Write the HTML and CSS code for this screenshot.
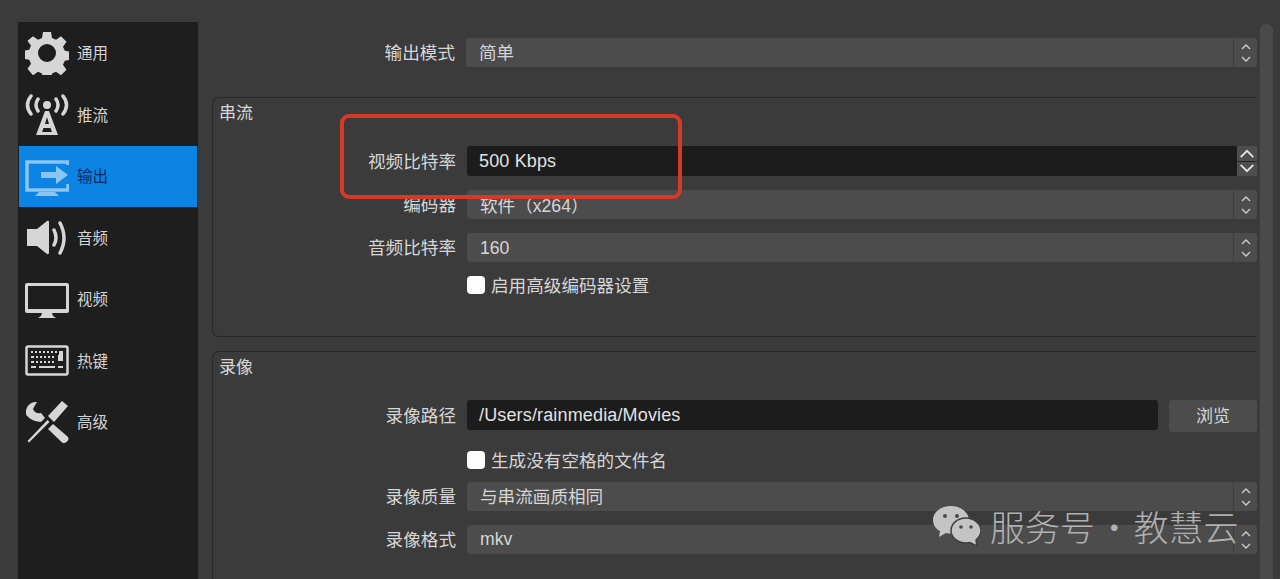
FILE: index.html
```html
<!DOCTYPE html>
<html lang="zh">
<head>
<meta charset="utf-8">
<title>设置</title>
<link rel="stylesheet" href="styles.css">
</head>
<body>
<nav class="sidebar">
  <div class="nav-item">
    <svg class="nav-icon" viewBox="0 0 44 44"><path class="fill" fill-rule="evenodd" d="M18 1h8l1 6 4 1.800 5-3.500 5.500 5.500-3.500 5 1.800 4 6 1v8l-6 1-1.800 4 3.500 5-5.500 5.500-5-3.500-4 1.800-1 6h-8l-1-6-4-1.800-5 3.500L2.500 37.800l3.500-5-1.800-4-6-1v-8l6-1 1.800-4-3.500-5L8 5.300l5 3.500 4-1.800zM22 13a9 9 0 1 0 0 18 9 9 0 0 0 0-18z"/></svg>
    <span>通用</span>
  </div>
  <div class="nav-item">
    <svg class="nav-icon" viewBox="0 0 44 44"><circle class="fill" cx="22" cy="12" r="4"/><path class="fill" fill-rule="evenodd" d="M20 18h4l9 24H11zM22 24l-2 7h4zM18.500 35l-1.500 4h10l-1.500-4z"/><path class="line" d="M6 3Q-1 12 6 21M13 6Q9 12 13 18M38 3Q45 12 38 21M31 6Q35 12 31 18"/></svg>
    <span>推流</span>
  </div>
  <div class="nav-item active">
    <svg class="nav-icon" viewBox="0 0 44 44"><path class="blue-line" d="M43 11V8H2v28h41v-6"/><path class="blue-fill" d="M14 38h16l4 4H10zM16 18h15v-6l12 9-12 9v-6H16z"/></svg>
    <span>输出</span>
  </div>
  <div class="nav-item">
    <svg class="nav-icon" viewBox="0 0 44 44"><path class="fill" d="M2 13h10L22 5c1-.500 2 0 2 1v31c0 1-1 1.500-2 1l-10-8H2z"/><path class="line" d="M29 14q4 8 0 15M35 7q8 15 0 30"/></svg>
    <span>音频</span>
  </div>
  <div class="nav-item">
    <svg class="nav-icon" viewBox="0 0 44 44"><path class="fill" fill-rule="evenodd" d="M2 6h40a2 2 0 0 1 2 2v26a2 2 0 0 1-2 2H2a2 2 0 0 1-2-2V8a2 2 0 0 1 2-2zM3 9v23h38V9zM17 36h10l1 3 3 2H13l3-2z"/></svg>
    <span>视频</span>
  </div>
  <div class="nav-item">
    <svg class="nav-icon" viewBox="0 0 44 44"><rect class="line-thin" x="1.500" y="7.500" width="41" height="28" rx="1.500"/><path class="keys keys-up" d="M6 14h2v2H6zM10 14h2v2h-2zM14 14h2v2h-2zM18 14h2v2h-2zM22 14h2v2h-2zM26 14h2v2h-2zM30 14h2v2h-2zM34 14h4v10h-5v-6h1zM6 19h3v2H6zM11 19h2v2h-2zM15 19h2v2h-2zM19 19h2v2h-2zM23 19h2v2h-2zM27 19h2v2h-2zM6 24h3v2H6zM11 24h2v2h-2zM15 24h2v2h-2zM19 24h2v2h-2zM23 24h2v2h-2zM27 24h2v2h-2zM6 29h5v2H6zM14 29h16v2H14zM33 29h5v2h-5z"/></svg>
    <span>热键</span>
  </div>
  <div class="nav-item">
    <svg class="nav-icon" viewBox="0 0 44 44"><path class="fill" d="M37 1l6 5-14 16-6-6zM22.500 20l2 2L4 42.500l-1.500-1.500zM28 24l15 13c1 2 .500 3.500-1.500 5s-3.500 1.500-5 0L23 29zM12 2C5 1-1 8 1.500 15.500 6 20 11 22 16 22l4-4-4-5c-4 1-7-1-8-4l1-2z"/></svg>
    <span>高级</span>
  </div>
</nav>

<main class="main">
  <div class="row top-row">
    <label class="label">输出模式</label>
    <div class="select"><span class="raise">简单</span><i class="spin"><svg viewBox="0 0 12 22"><path d="M2 7l4-4 4 4M2 15l4 4 4-4"/></svg></i></div>
  </div>

  <section class="group group-stream">
    <h2 class="group-title">串流</h2>
    <div class="row row-bitrate">
      <label class="label">视频比特率</label>
      <div class="input input-bitrate"><span>500 Kbps</span></div>
      <div class="stepper">
        <div class="step"><svg viewBox="0 0 20 14"><path d="M3 11l7-7 7 7"/></svg></div>
        <div class="step"><svg viewBox="0 0 20 14"><path d="M3 3l7 7 7-7"/></svg></div>
      </div>
    </div>
    <div class="row row-encoder">
      <label class="label">编码器</label>
      <div class="select"><span>软件（x264）</span><i class="spin"><svg viewBox="0 0 12 22"><path d="M2 7l4-4 4 4M2 15l4 4 4-4"/></svg></i></div>
    </div>
    <div class="row row-audio">
      <label class="label">音频比特率</label>
      <div class="select"><span class="lower">160</span><i class="spin"><svg viewBox="0 0 12 22"><path d="M2 7l4-4 4 4M2 15l4 4 4-4"/></svg></i></div>
    </div>
    <div class="row row-check">
      <span class="label"></span>
      <div class="check"><b class="box"></b><span class="raise">启用高级编码器设置</span></div>
    </div>
  </section>

  <section class="group group-record">
    <h2 class="group-title">录像</h2>
    <div class="row row-path">
      <label class="label">录像路径</label>
      <div class="input input-path"><span>/Users/rainmedia/Movies</span></div>
      <div class="button">浏览</div>
    </div>
    <div class="row row-check2">
      <span class="label"></span>
      <div class="check"><b class="box"></b><span class="raise">生成没有空格的文件名</span></div>
    </div>
    <div class="row row-quality">
      <label class="label">录像质量</label>
      <div class="select"><span class="raise">与串流画质相同</span><i class="spin"><svg viewBox="0 0 12 22"><path d="M2 7l4-4 4 4M2 15l4 4 4-4"/></svg></i></div>
    </div>
    <div class="row row-format">
      <label class="label">录像格式</label>
      <div class="select"><span>mkv</span><i class="spin"><svg viewBox="0 0 12 22"><path d="M2 7l4-4 4 4M2 15l4 4 4-4"/></svg></i></div>
    </div>
  </section>
</main>

<div class="scrollbar"></div>

<div class="highlight"></div>

<div class="watermark">
  <svg class="wechat" viewBox="0 0 48 40"><path class="wm-fill" d="M18 0C8 0 0 6 0 14c0 5 3 9 7 11l-1 6 7-4c2 .500 3 .500 5 .500C28 27.500 36 21 36 14S28 0 18 0z"/><circle class="wm-dot" cx="12" cy="10" r="2"/><circle class="wm-dot" cx="24" cy="10" r="2"/><path class="wm-fill wm-edge" d="M33 12c-9 0-15 6-15 12.500S24 37 33 37c1.500 0 3 0 4-.500l7 3.500-1-6c3-2.500 5-6 5-9.500C48 18 41 12 33 12z"/><circle class="wm-dot" cx="28" cy="21" r="1.800"/><circle class="wm-dot" cx="38" cy="21" r="1.800"/></svg>
  <span class="wm-text">服务号 · 教慧云</span>
</div>
</body>
</html>
```

FILE: styles.css
```css
* { box-sizing: border-box; }

html, body { height: 100%; }

body {
  margin: 0;
  height: 579px;
  overflow: hidden;
  display: flex;
  align-items: flex-start;
  background: #3b3b3b;
  color: #d9d9d9;
  font-family: "Liberation Sans", "Noto Sans CJK SC", sans-serif;
  font-size: 17px;
}

.sidebar {
  flex: none;
  width: 180px;
  height: 557px;
  margin: 22px 0 0 18px;
  padding: .5px 1px 0;
  background: #1e1e1e;
}

.nav-item {
  display: flex;
  align-items: center;
  gap: 8px;
  height: 61.5px;
  padding-left: 6px;
  font-size: 15.5px;
  color: #d4d4d4;
}

.nav-item span { padding-bottom: 2px; }

.nav-item.active { background: #0b84e3; color: #05296b; }

.nav-icon { width: 44px; height: 44px; flex: none; }

.fill { fill: #d6d6d6; }
.keys { fill: #d6d6d6; }
.keys-up { transform: translateY(-2px); }
.line { fill: none; stroke: #d6d6d6; stroke-width: 3.500; stroke-linecap: round; }
.line-thin { fill: none; stroke: #d6d6d6; stroke-width: 2.500; }
.blue-line { fill: none; stroke: #8ac5f2; stroke-width: 3.500; }
.blue-fill { fill: #8ac5f2; }

.main {
  flex: none;
  width: 1045px;
  margin-left: 14px;
  padding-top: 38px;
}

.row { display: flex; align-items: center; }

.label {
  flex: none;
  width: 243px;
  padding-bottom: 2px;
  text-align: right;
  white-space: nowrap;
  font-size: 17.6px;
  color: #d6d6d6;
}

.raise { padding-bottom: 2px; }
.lower { padding-top: 2px; }

.select {
  flex: 1;
  display: flex;
  align-items: center;
  justify-content: space-between;
  height: 29px;
  margin-left: 11px;
  padding-left: 13px;
  border-radius: 3px;
  background: #4c4c4c;
  font-size: 17.6px;
  color: #d6d6d6;
}

.spin {
  display: flex;
  align-items: center;
  justify-content: center;
  width: 24px;
  height: 100%;
  border-left: 1px solid #3e3e3e;
}

.spin svg {
  width: 12px;
  height: 22px;
  fill: none;
  stroke: #d0d0d0;
  stroke-width: 1.300;
}

.top-row { height: 29px; }

.group {
  position: relative;
  border: 1px solid #292929;
  border-right: 0;
  border-radius: 7px 0 0 7px;
}

.group-stream { height: 240px; margin-top: 30px; }
.group-record { height: 240px; margin-top: 14px; }

.group-title {
  margin: 0;
  padding: 4px 0 0 6px;
  height: 31px;
  font-size: 17px;
  font-weight: 400;
  line-height: 24px;
  color: #d6d6d6;
}

.group .label { width: 243px; }

.input {
  display: flex;
  align-items: center;
  height: 30px;
  margin-left: 11px;
  padding-left: 12px;
  background: #1c1c1c;
  color: #e2e2e2;
  font-size: 18px;
  letter-spacing: .15px;
  border-radius: 3px;
}

.input-bitrate { flex: 1; border-radius: 3px 0 0 3px; }
.input-path { flex: 1; }

.stepper {
  flex: none;
  width: 20px;
  height: 30px;
  display: flex;
  flex-direction: column;
  gap: 1px;
  background: #262626;
}

.step {
  flex: 1;
  background: #4e4e4e;
  display: flex;
  align-items: center;
  justify-content: center;
}

.step svg {
  width: 18px;
  height: 13px;
  fill: none;
  stroke: #e4e4e4;
  stroke-width: 2;
}

.button {
  flex: none;
  align-self: flex-start;
  width: 88px;
  height: 32px;
  margin-left: 11px;
  background: #4c4c4c;
  border-radius: 3px;
  font-size: 17px;
  line-height: 34px;
  text-align: center;
  color: #d6d6d6;
}

.check {
  display: flex;
  align-items: center;
  gap: 6px;
  margin-left: 11px;
  font-size: 17.6px;
  color: #d6d6d6;
}

.box {
  width: 18px;
  height: 18px;
  border-radius: 4px;
  background: #fdfdfd;
}

.row-bitrate { height: 30px; margin-top: 17px; }
.row-encoder { height: 29px; margin-top: 14px; }
.row-audio { height: 29px; margin-top: 14px; }
.row-check { height: 18px; margin-top: 14px; }

.row-path { height: 30px; margin-top: 17px; }
.row-check2 { height: 18px; margin-top: 21px; }
.row-quality { height: 29px; margin-top: 13px; }
.row-format { height: 29px; margin-top: 14px; }

.scrollbar {
  position: absolute;
  left: 1260px;
  top: 24px;
  width: 13px;
  height: 560px;
  border-radius: 6px;
  background: #4a4a4a;
}

.highlight {
  position: absolute;
  left: 340px;
  top: 114px;
  width: 342px;
  height: 85px;
  border: 4px solid #d63a27;
  border-radius: 9px;
}

.watermark {
  position: absolute;
  left: 933px;
  top: 504px;
  display: flex;
  align-items: center;
  gap: 9px;
  color: #b0b0b0;
}

.wechat { width: 48px; height: 40px; flex: none; }
.wm-fill { fill: #c4c4c4; }
.wm-edge { stroke: #3f3f3f; stroke-width: 1.500; }
.wm-dot { fill: #4a4a4a; }

.wm-text {
  font-family: "Noto Sans CJK SC", sans-serif;
  font-size: 35px;
  line-height: 44px;
  white-space: pre;
  word-spacing: -6px;
  font-weight: 300;
}
```
